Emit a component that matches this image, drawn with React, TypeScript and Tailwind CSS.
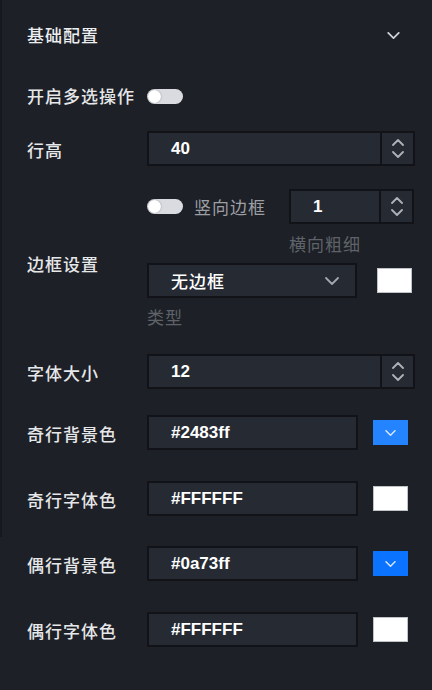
import React from "react";

const cjk = { fontFamily: '"Noto Sans CJK SC", "Noto Sans", sans-serif' };
const num = { fontFamily: '"Liberation Sans", Arial, "Noto Sans CJK SC", sans-serif' };

function Chevron({ className = "", color = "#c9ccd1", w = 14, h = 8, sw = 2 }: { className?: string; color?: string; w?: number; h?: number; sw?: number }) {
  return (
    <svg width={w} height={h} viewBox="0 0 14 8" className={className} fill="none">
      <path d="M1 1l6 6 6-6" stroke={color} strokeWidth={sw} strokeLinecap="round" strokeLinejoin="round" />
    </svg>
  );
}

function Toggle() {
  return (
    <div className="w-[36px] h-[15px] rounded-full bg-[#d9dbe1] flex items-center px-[1px]">
      <div className="w-[13px] h-[13px] rounded-full bg-white shadow-[0_0_2px_rgba(0,0,0,0.35)]" />
    </div>
  );
}

function Stepper() {
  return (
    <div className="w-[33px] h-full border-l-2 border-[#111318] flex flex-col items-center justify-center gap-[5px]">
      <svg width="12" height="7" viewBox="0 0 12 7" fill="none">
        <path d="M1 6l5-5 5 5" stroke="#aeb2b8" strokeWidth="1.8" strokeLinecap="round" strokeLinejoin="round" />
      </svg>
      <svg width="12" height="7" viewBox="0 0 12 7" fill="none">
        <path d="M1 1l5 5 5-5" stroke="#aeb2b8" strokeWidth="1.8" strokeLinecap="round" strokeLinejoin="round" />
      </svg>
    </div>
  );
}

function NumberInput({ value, width }: { value: string; width: string }) {
  return (
    <div className={`${width} h-[35px] bg-[#262b33] border-2 border-[#111318] flex items-stretch`}>
      <div className="flex-1 flex items-center pl-[22px] text-white font-bold text-[17px]" style={num}>
        {value}
      </div>
      <Stepper />
    </div>
  );
}

function Label({ children }: { children: React.ReactNode }) {
  return (
    <div className="w-[120px] shrink-0 text-[#e6e7e9] text-[17px] tracking-[1px] font-medium pt-[3px]" style={cjk}>
      {children}
    </div>
  );
}

function ColorRow({ label, value, swatch, mt }: { label: string; value: string; swatch: "white" | "blue1" | "blue2"; mt: string }) {
  return (
    <div className={`flex items-center ${mt}`}>
      <Label>{label}</Label>
      <div className="w-[211px] h-[35px] bg-[#262b33] border-2 border-[#111318] flex items-center pl-[22px] text-white font-bold text-[17px]" style={num}>
        {value}
      </div>
      {swatch === "white" ? (
        <div className="ml-[15px] w-[35px] h-[25px] bg-white border border-[#bfc2c6]" />
      ) : (
        <div className={`ml-[15px] w-[35px] h-[25px] flex items-center justify-center ${swatch === "blue1" ? "bg-[#2483ff]" : "bg-[#0a73ff]"}`}>
          <Chevron w={11} h={6} color="#d7e6ff" sw={2} />
        </div>
      )}
    </div>
  );
}

export default function App() {
  return (
    <div className="w-[432px] h-[690px] bg-[#1d2026] flex overflow-hidden">
      <div className="w-[2px] h-[537px] bg-[#16181d] shrink-0" />
      <div className="flex-1 pl-[25px] pr-[17px]">
        {/* Header */}
        <div className="h-[70px] flex items-center justify-between">
          <div className="text-[#eceef0] text-[17px] tracking-[1px] font-medium" style={cjk}>基础配置</div>
          <Chevron className="mr-[15px]" w={13} h={7} color="#cfd2d6" />
        </div>

        {/* Multi-select */}
        <div className="h-[40px] mt-[6px] flex items-center gap-[12px]">
          <div className="text-[#e6e7e9] text-[17px] tracking-[1px] font-medium" style={cjk}>开启多选操作</div>
          <Toggle />
        </div>

        {/* Row height */}
        <div className="flex items-center mt-[15px]">
          <Label>行高</Label>
          <NumberInput value="40" width="w-[268px]" />
        </div>

        {/* Border settings */}
        <div className="flex items-center mt-[23px]">
          <Label>边框设置</Label>
          <div className="flex flex-col">
            <div className="flex items-center h-[35px]">
              <Toggle />
              <div className="ml-[11px] w-[95px] text-[#9c9fa4] text-[17px] tracking-[1px]" style={cjk}>竖向边框</div>
              <NumberInput value="1" width="w-[125px]" />
            </div>
            <div className="h-[39px] flex items-center pl-[142px] text-[#5f6369] text-[17px] tracking-[1px]" style={cjk}>横向粗细</div>
            <div className="flex items-center">
              <div className="w-[210px] h-[35px] bg-[#262b33] border-2 border-[#111318] flex items-center justify-between pl-[22px] pr-[16px]">
                <span className="text-white text-[17px] tracking-[1px] font-medium" style={cjk}>无边框</span>
                <Chevron w={14} h={8} color="#a3a7ad" sw={1.8} />
              </div>
              <div className="ml-[20px] w-[35px] h-[25px] bg-white border border-[#bfc2c6]" />
            </div>
            <div className="h-[38px] flex items-center text-[#5f6369] text-[17px] tracking-[1px]" style={cjk}>类型</div>
          </div>
        </div>

        {/* Font size */}
        <div className="flex items-center mt-[18px]">
          <Label>字体大小</Label>
          <NumberInput value="12" width="w-[268px]" />
        </div>

        <ColorRow label="奇行背景色" value="#2483ff" swatch="blue1" mt="mt-[26px]" />
        <ColorRow label="奇行字体色" value="#FFFFFF" swatch="white" mt="mt-[31px]" />
        <ColorRow label="偶行背景色" value="#0a73ff" swatch="blue2" mt="mt-[30px]" />
        <ColorRow label="偶行字体色" value="#FFFFFF" swatch="white" mt="mt-[31px]" />
      </div>
    </div>
  );
}
